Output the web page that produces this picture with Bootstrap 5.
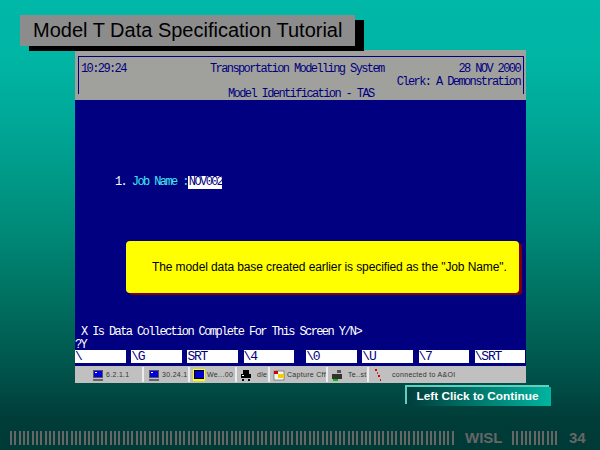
<!DOCTYPE html>
<html lang="en"><head><meta charset="utf-8"><title>Model T Data Specification Tutorial</title>
<link href="https://cdn.jsdelivr.net/npm/bootstrap@5.3.0/dist/css/bootstrap.min.css" rel="stylesheet">
<style>
html,body{height:450px;overflow:hidden}
body{width:600px;background:linear-gradient(180deg,#00b8a8 0,#00b5a4 60px,#00a898 120px,#008a78 230px,#007060 300px,#004d46 385px,#003c38 420px,#003a36 450px);padding-top:15px;font-family:"Liberation Sans",Arial,sans-serif}
.slide-title{margin-left:20px;width:335px;height:31px;background:#8c8c8c;box-shadow:9px 5px 0 #000;color:#000;font-size:20px;line-height:30px;padding-left:13px;position:relative;z-index:2}
.term{margin-left:75px;margin-top:4px;width:451px;height:333px;position:relative;font-family:"Liberation Mono",monospace;font-size:12px;letter-spacing:-1.6px;color:#000080}
.term-head{height:50px;background:#a0a09c;padding:6px 2px 0 3px}
.term-frame{height:38px;border:1px solid #000080;border-bottom:0;padding:6px 3px 0 2px}
.head-row{height:12.5px;line-height:12.5px;white-space:pre}
.head-time{width:129px}
.head-title3{padding-left:147px}
.term-body{height:266px;background:#000080;color:#fff;padding-top:76px}
.term-row{height:13px;line-height:13px;white-space:pre}
.job{padding-left:40px}
.job-label{color:#3fe8ef}
.job-val{background:#fff;color:#000080;padding:0 1px;display:inline-block;width:34px;height:13px;vertical-align:top}
.prompt{margin-top:137px;padding-left:6px;height:12px;line-height:12px}
.prompt2{margin-top:2px;height:10px;line-height:10px;white-space:pre}
.fields{height:13px;gap:5.6px}
.fld{width:50.6px;background:#fff;color:#000080;font-size:13px;letter-spacing:-1.2px;line-height:13px;overflow:hidden}
.fld-gap{margin-left:6.4px}
.tray{height:17px;background:#c0c0c0;color:#333;font-family:"Liberation Sans",sans-serif;font-size:7px;letter-spacing:.3px;line-height:15px}
.tray-item{height:15px;border-right:2px solid #ececec;gap:2px;white-space:nowrap;flex:none}
.tray svg{width:12px;height:12px;flex:none}
.ti1{width:69px;padding-left:17px}
.ti2{width:46px;padding-left:4px}
.ti3{width:47px;padding-left:3px}
.ti4{width:33px;padding-left:3px}
.ti4 svg,.ti6 svg{margin-right:3px}
.ti5{width:58px;padding-left:3px}
.ti6{width:41px;padding-left:3px}
.ti7{padding-left:4px;gap:7px;white-space:nowrap}
.callout{position:absolute;left:51px;top:191px;width:393px;height:52px;background:#ff0;border-radius:4px;box-shadow:3px 2px 0 #800000;color:#000;font-family:"Liberation Sans",Arial,sans-serif;font-size:12px;letter-spacing:-.1px;padding-left:26px;display:flex;align-items:center}
.next-btn{margin-left:407px;margin-top:4px;width:144px;height:19px;box-shadow:-2px -2px 0 #5fcfc0;background:linear-gradient(90deg,#003d3a,#00b5a0);color:#fff;font-weight:700;font-size:11.8px;line-height:18px;padding-right:3px;text-align:center}
.foot{margin-top:25px;padding-left:10px;height:14px;color:#666;font-weight:700;font-size:15px;line-height:14px}
.bars{height:14px;background:repeating-linear-gradient(90deg,#666 0,#666 2px,transparent 2px,transparent 4.33px)}
.bars-long{width:446px}
.bars-short{width:48px;margin-left:9px}
.foot-wisl{width:38px;margin-left:9px}
.foot-num{margin-left:9px}
</style></head><body>
<div class="slide-title">Model T Data Specification Tutorial</div>
<div class="term">
  <div class="term-head"><div class="term-frame">
    <div class="head-row d-flex justify-content-between"><span class="head-time">10:29:24</span><span>Transportation Modelling System</span><span class="ms-auto">28 NOV 2000</span></div>
    <div class="head-row text-end">Clerk: A Demonstration</div>
    <div class="head-row head-title3">Model Identification - TAS</div>
  </div></div>
  <div class="term-body">
    <div class="term-row job">1. <span class="job-label">Job Name :</span><span class="job-val">NOV002</span></div>
    <div class="prompt">X Is Data Collection Complete For This Screen Y/N&gt;</div>
    <div class="prompt2">?Y</div>
    <div class="fields d-flex"><div class="fld">\</div><div class="fld">\G</div><div class="fld">SRT</div><div class="fld">\4</div><div class="fld fld-gap">\0</div><div class="fld">\U</div><div class="fld">\7</div><div class="fld">\SRT</div></div>
  </div>
  <div class="tray d-flex align-items-center">
    <div class="tray-item ti1 d-flex align-items-center"><svg viewBox="0 0 12 12"><rect x="1" y="1" width="10" height="8" fill="#555"/><rect x="2" y="2" width="8" height="6" fill="#0000e0"/><rect x="3" y="3" width="2" height="1" fill="#fff"/><rect x="1" y="10" width="10" height="2" fill="#666"/></svg><span>6.2.1.1</span></div>
    <div class="tray-item ti2 d-flex align-items-center"><svg viewBox="0 0 12 12"><rect x="1" y="1" width="10" height="8" fill="#555"/><rect x="2" y="2" width="8" height="6" fill="#0000e0"/><rect x="3" y="3" width="2" height="1" fill="#fff"/><rect x="1" y="10" width="10" height="2" fill="#666"/></svg><span>30.24.1</span></div>
    <div class="tray-item ti3 d-flex align-items-center"><svg viewBox="0 0 12 12"><rect x="0" y="0" width="12" height="12" fill="#ff0"/><rect x="1" y="1" width="10" height="9" fill="#000"/><rect x="2" y="2" width="9" height="7" fill="#0000d0"/></svg><span>We...00</span></div>
    <div class="tray-item ti4 d-flex align-items-center"><svg viewBox="0 0 12 12"><rect x="3" y="1" width="6" height="4" fill="#000"/><rect x="1" y="5" width="10" height="4" fill="#000"/><rect x="2" y="6" width="2" height="1" fill="#fff"/><rect x="2" y="10" width="2" height="2" fill="#000"/><rect x="8" y="10" width="2" height="2" fill="#000"/></svg><span>dle</span></div>
    <div class="tray-item ti5 d-flex align-items-center"><svg viewBox="0 0 12 12"><rect x="1" y="2" width="10" height="9" fill="#f4f4f4" stroke="#555" stroke-width=".6"/><rect x="1" y="2" width="4" height="3" fill="#d00000"/><rect x="5" y="5" width="6" height="4" fill="#f0d000"/></svg><span>Capture Cff</span></div>
    <div class="tray-item ti6 d-flex align-items-center"><svg viewBox="0 0 12 12"><rect x="6" y="1" width="4" height="3" fill="#555"/><rect x="1" y="5" width="10" height="5" fill="#333"/><rect x="2" y="10" width="5" height="2" fill="#00c000"/></svg><span>Te..st</span></div>
    <div class="ti7 d-flex align-items-center"><svg viewBox="0 0 12 12"><rect x="2" y="0" width="2" height="2" fill="#e00000"/><rect x="4" y="3" width="1" height="2" fill="#a04040"/><rect x="5" y="6" width="2" height="2" fill="#e00000"/><rect x="7" y="10" width="1" height="2" fill="#e00000"/></svg><span>connected to A&amp;OI</span></div>
  </div>
  <div class="callout">The model data base created earlier is specified as the "Job Name".</div>
</div>
<div class="next-btn">Left Click to Continue</div>
<div class="foot d-flex"><div class="bars bars-long"></div><div class="foot-wisl">WISL</div><div class="bars bars-short"></div><div class="foot-num">34</div></div>
</body></html>
